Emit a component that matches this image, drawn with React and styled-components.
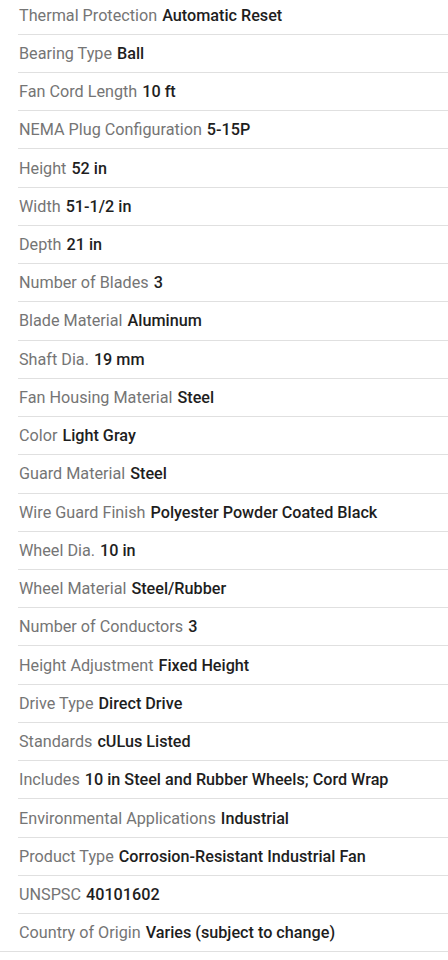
import React from "react";
import styled, { createGlobalStyle } from "styled-components";

const GlobalStyle = createGlobalStyle`
  html, body {
    margin: 0;
    padding: 0;
    background: #ffffff;
  }
  body {
    font-family: Roboto, "Noto Sans", "Liberation Sans", sans-serif;
    -webkit-font-smoothing: antialiased;
  }
`;

const Page = styled.div`
  width: 448px;
  height: 960px;
  overflow: hidden;
  background: #ffffff;
`;

const List = styled.ul`
  list-style: none;
  margin: -3.5px 0 0 0;
  padding: 0;
`;

const Row = styled.li`
  box-sizing: border-box;
  height: 38.24px;
  margin-left: 18px;
  padding: 1px 0 0 1px;
  display: flex;
  align-items: center;
  gap: 5px;
  border-bottom: 1px solid #e0e0e0;
  font-size: 16.2px;
  line-height: 20px;
  white-space: nowrap;

  &:last-child {
    margin-left: 0;
    padding-left: 19px;
  }
`;

const Label = styled.span`
  color: #757575;
  font-weight: 400;
`;

const Value = styled.span`
  color: #1e1e1e;
  font-weight: 500;
`;

const specs = [
  ["Thermal Protection", "Automatic Reset"],
  ["Bearing Type", "Ball"],
  ["Fan Cord Length", "10 ft"],
  ["NEMA Plug Configuration", "5-15P"],
  ["Height", "52 in"],
  ["Width", "51-1/2 in"],
  ["Depth", "21 in"],
  ["Number of Blades", "3"],
  ["Blade Material", "Aluminum"],
  ["Shaft Dia.", "19 mm"],
  ["Fan Housing Material", "Steel"],
  ["Color", "Light Gray"],
  ["Guard Material", "Steel"],
  ["Wire Guard Finish", "Polyester Powder Coated Black"],
  ["Wheel Dia.", "10 in"],
  ["Wheel Material", "Steel/Rubber"],
  ["Number of Conductors", "3"],
  ["Height Adjustment", "Fixed Height"],
  ["Drive Type", "Direct Drive"],
  ["Standards", "cULus Listed"],
  ["Includes", "10 in Steel and Rubber Wheels; Cord Wrap"],
  ["Environmental Applications", "Industrial"],
  ["Product Type", "Corrosion-Resistant Industrial Fan"],
  ["UNSPSC", "40101602"],
  ["Country of Origin", "Varies (subject to change)"],
];

export default function App() {
  return (
    <Page>
      <GlobalStyle />
      <List>
        {specs.map(([label, value]) => (
          <Row key={label}>
            <Label>{label}</Label>
            <Value>{value}</Value>
          </Row>
        ))}
      </List>
    </Page>
  );
}
